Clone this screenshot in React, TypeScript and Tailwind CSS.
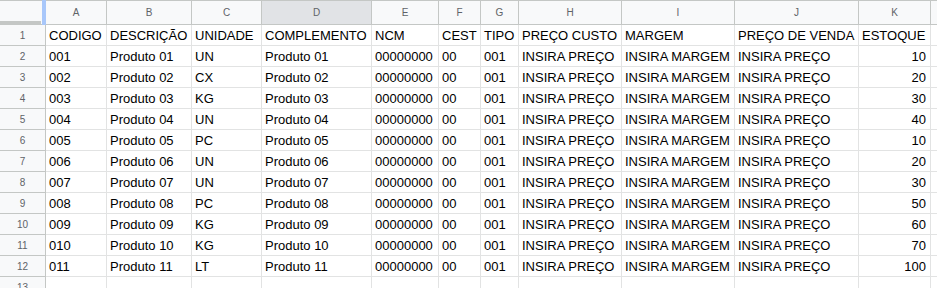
import React from 'react';

const columns = [
  { key: 'A', label: 'A' },
  { key: 'B', label: 'B' },
  { key: 'C', label: 'C' },
  { key: 'D', label: 'D', active: true },
  { key: 'E', label: 'E' },
  { key: 'F', label: 'F' },
  { key: 'G', label: 'G' },
  { key: 'H', label: 'H' },
  { key: 'I', label: 'I' },
  { key: 'J', label: 'J' },
  { key: 'K', label: 'K' },
  { key: 'L', label: '' },
];

const header = [
  'CODIGO',
  'DESCRIÇÃO',
  'UNIDADE',
  'COMPLEMENTO',
  'NCM',
  'CEST',
  'TIPO',
  'PREÇO CUSTO',
  'MARGEM',
  'PREÇO DE VENDA',
  'ESTOQUE',
];

const products = [
  { un: 'UN', stock: 10 },
  { un: 'CX', stock: 20 },
  { un: 'KG', stock: 30 },
  { un: 'UN', stock: 40 },
  { un: 'PC', stock: 10 },
  { un: 'UN', stock: 20 },
  { un: 'UN', stock: 30 },
  { un: 'PC', stock: 50 },
  { un: 'KG', stock: 60 },
  { un: 'KG', stock: 70 },
  { un: 'LT', stock: 100 },
];

const rows: string[][] = [
  header,
  ...products.map((p, i) => {
    const n = String(i + 1).padStart(2, '0');
    return [
      `0${n}`,
      `Produto ${n}`,
      p.un,
      `Produto ${n}`,
      '00000000',
      '00',
      '001',
      'INSIRA PREÇO',
      'INSIRA MARGEM',
      'INSIRA PREÇO',
      String(p.stock),
    ];
  }),
];

const Cell = ({ text, right }: { text: string; right?: boolean }) => (
  <div
    className={`h-[21px] border-r border-b border-[#e2e3e3] bg-white flex items-end pb-[1px] px-[3px] overflow-hidden whitespace-nowrap text-[13px] leading-[17px] text-black ${
      right ? 'justify-end pr-[4px]' : ''
    }`}
  >
    {text}
  </div>
);

export default function App() {
  return (
    <div
      className="w-[937px] h-[288px] overflow-hidden bg-white"
      style={{ fontFamily: '"Liberation Sans", Arial, sans-serif' }}
    >
      <div className="grid grid-cols-[46px_61px_85px_70px_110px_67px_42px_38px_103px_113px_124px_72px_1fr]">
        {/* corner */}
        <div className="relative h-[25px] bg-[#f8f9fa] border-t border-b border-r border-[#c4c7c5]">
          <div className="absolute left-0 bottom-[-1px] w-[41px] h-[4px] bg-[#c4c7c5]" />
          <div className="absolute right-[-1px] top-[-1px] w-[4px] h-[25px] bg-[#a8c7fa]" />
        </div>
        {columns.map((c) => (
          <div
            key={c.key}
            className={`h-[25px] border-t border-b border-r border-[#c4c7c5] flex items-center justify-center text-[10px] text-[#5f6368] ${
              c.active ? 'bg-[#e1e3e6]' : 'bg-[#f8f9fa]'
            }`}
          >
            {c.label}
          </div>
        ))}

        {rows.map((r, ri) => (
          <React.Fragment key={ri}>
            <div className="h-[21px] bg-[#f8f9fa] border-r border-b border-[#c4c7c5] flex items-center justify-center text-[10px] text-[#5f6368]">
              {ri + 1}
            </div>
            {r.map((t, ci) => (
              <Cell key={ci} text={t} right={ri > 0 && ci === 10} />
            ))}
            <Cell text="" />
          </React.Fragment>
        ))}

        {/* row 13, cut off */}
        <div className="h-[21px] bg-[#f8f9fa] border-r border-[#c4c7c5] flex items-center justify-center text-[10px] text-[#5f6368]">
          13
        </div>
        {columns.map((c) => (
          <div key={c.key} className="h-[21px] border-r border-[#e2e3e3] bg-white" />
        ))}
      </div>
    </div>
  );
}
